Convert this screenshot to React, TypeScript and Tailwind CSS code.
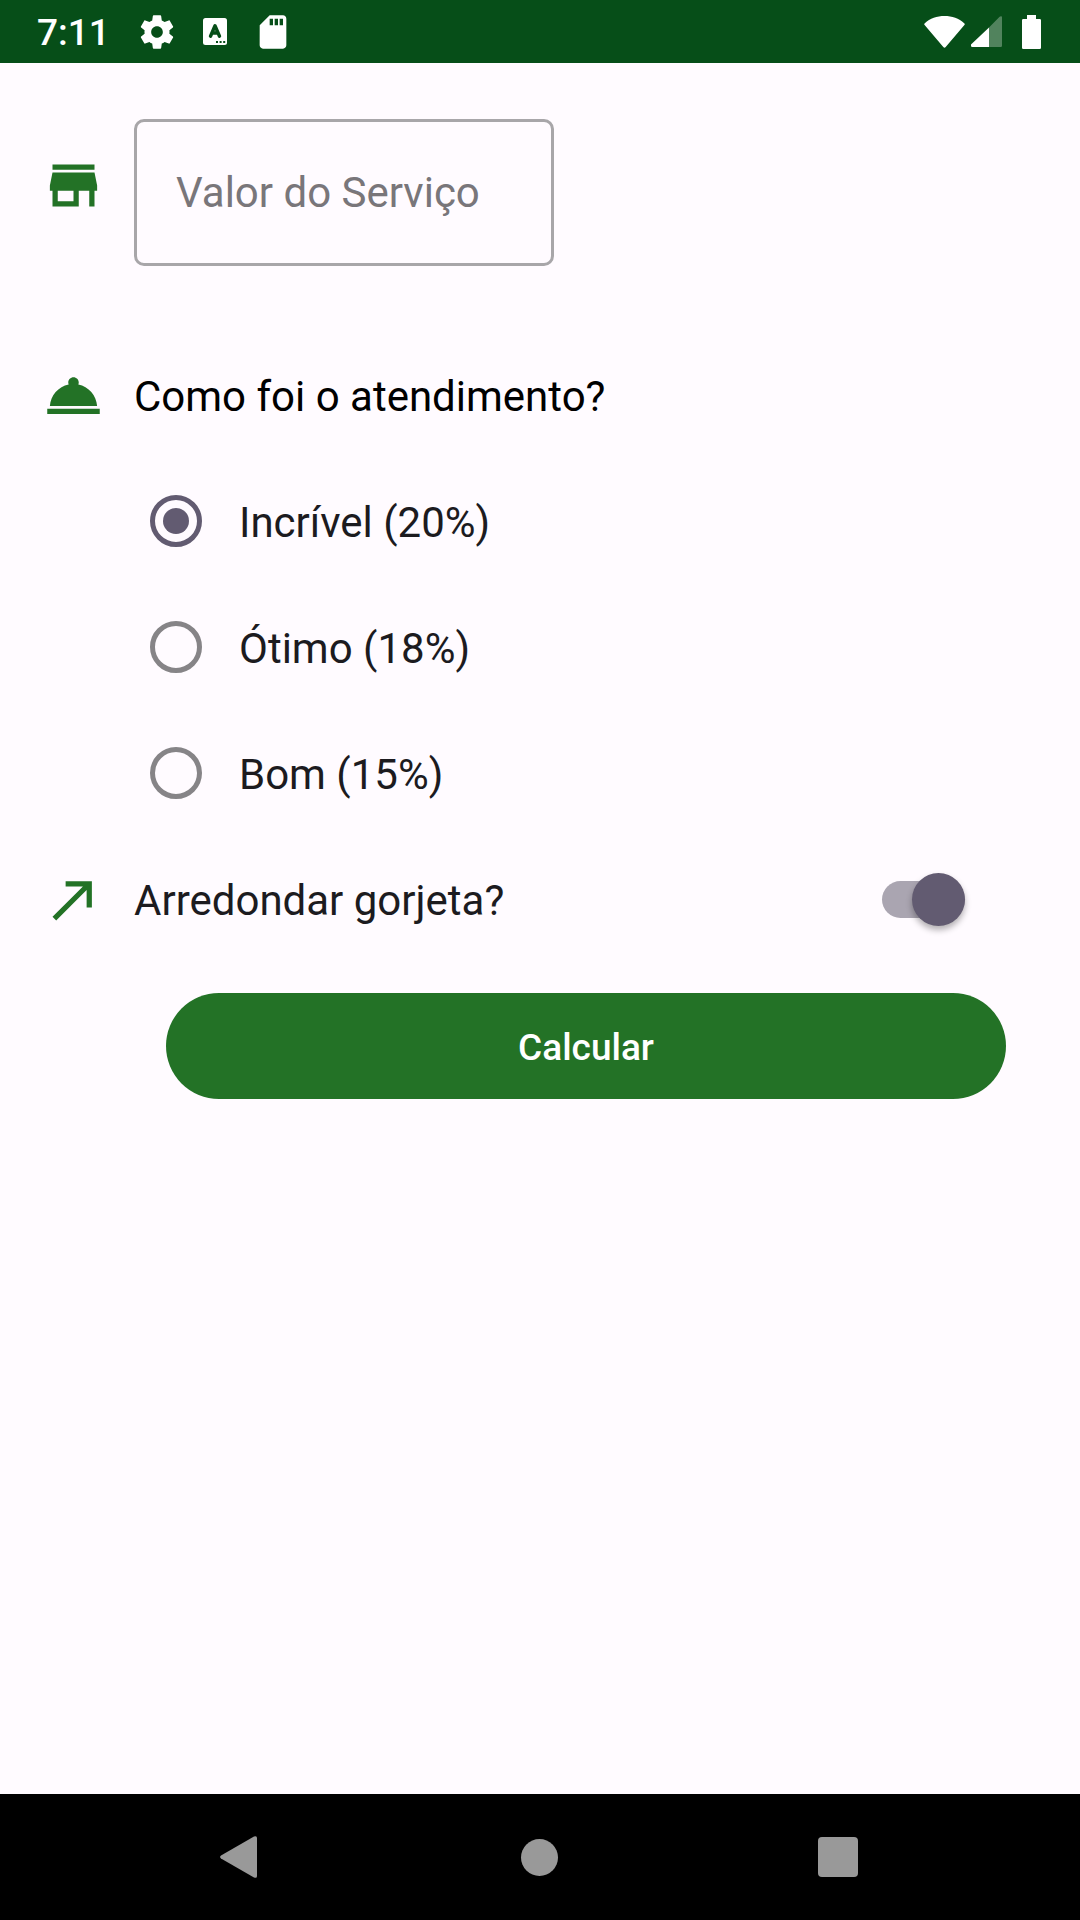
import { useState } from "react";

const OPTIONS = [
  { value: "20", label: "Incrível (20%)" },
  { value: "18", label: "Ótimo (18%)" },
  { value: "15", label: "Bom (15%)" },
];

function Icon({ d, className }: { d: string; className: string }) {
  return (
    <svg viewBox="0 0 24 24" fill="currentColor" aria-hidden="true" className={className}>
      <path d={d} />
    </svg>
  );
}

function StatusBar() {
  return (
    <header className="flex h-[63px] items-center justify-between bg-[#064e18] pl-[37px] pr-[39px] text-white">
      <div className="flex items-center">
        <span className="text-[37px] leading-[43px] font-medium pt-0.5">7:11</span>
        <Icon
          className="ml-[27px] size-10"
          d="M19.43 12.98c.04-.32.07-.64.07-.98s-.03-.66-.07-.98l2.11-1.65c.19-.15.24-.42.12-.64l-2-3.460c-.12-.22-.39-.3-.61-.22l-2.490 1c-.52-.4-1.080-.73-1.690-.98l-.38-2.650C14.460 2.180 14.250 2 14 2h-4c-.25 0-.46.180-.49.420l-.38 2.650c-.61.25-1.170.59-1.690.98l-2.490-1c-.23-.09-.49 0-.61.22l-2 3.460c-.13.22-.07.49.12.640l2.110 1.650c-.04.320-.07.650-.07.980s.03.660.07.980l-2.110 1.650c-.19.150-.24.420-.12.640l2 3.460c.12.220.39.300.61.220l2.490-1c.52.400 1.080.730 1.690.980l.38 2.650c.03.240.24.420.49.420h4c.25 0 .46-.18.49-.42l.38-2.650c.61-.25 1.170-.59 1.690-.98l2.490 1c.23.090.49 0 .61-.22l2-3.460c.12-.22.07-.49-.12-.64l-2.110-1.650zM12 15.500c-1.930 0-3.500-1.570-3.500-3.500s1.570-3.500 3.500-3.500 3.500 1.570 3.500 3.500-1.570 3.500-3.500 3.500z"
        />
        <svg viewBox="0 0 24 27" className="ml-[26px] h-[27px] w-6" aria-hidden="true">
          <rect width="24" height="27" rx="2.5" fill="#fff" />
          <path
            d="M7.500 18.200 12 7.800l4.500 10.400M9 15h6"
            fill="none"
            stroke="#064e18"
            strokeWidth="3.4"
            strokeLinecap="round"
            strokeLinejoin="round"
          />
          <path d="M13 23h2v2h-2zM16.600 23h2v2h-2zM20.200 23h2v2h-2z" fill="#064e18" />
        </svg>
        <Icon
          className="ml-[26px] size-10"
          d="M18 2h-8L4.020 8 4 20c0 1.100.9 2 2 2h12c1.100 0 2-.9 2-2V4c0-1.100-.9-2-2-2zm-6 6h-2V4h2v4zm3 0h-2V4h2v4zm3 0h-2V4h2v4z"
        />
      </div>
      <div className="flex items-center">
        <svg viewBox="0 0 41 32" className="h-8 w-[41px]" fill="currentColor" aria-hidden="true">
          <path d="M.6 9Q-.2 8 .8 7.200C6 2.500 13 0 20.500 0S35 2.500 40.200 7.200q1 .8.2 1.800L21.700 31q-1.200 1.300-2.400 0z" />
        </svg>
        <svg viewBox="0 0 31 31" className="ml-1.5 h-[31px] w-[31px]" fill="currentColor" aria-hidden="true">
          <path d="M18 11.500V31H1.200Q0 31 0 29.800V28.600z" />
          <path opacity=".3" d="M18 11.500V31h11.800q1.200 0 1.200-1.200V1.200C31 0 29.500-.2 28.600.8z" />
        </svg>
        <svg viewBox="0 0 19 34" className="ml-5 h-[34px] w-[19px]" fill="currentColor" aria-hidden="true">
          <path d="M5 0h9v4h3.700Q19 4 19 5.300v27.400q0 1.300-1.300 1.300H1.300Q0 34 0 32.700V5.300Q0 4 1.300 4H5z" />
        </svg>
      </div>
    </header>
  );
}

function NavigationBar() {
  return (
    <nav aria-label="Sistema" className="flex h-[126px] items-center justify-between bg-black pl-[220px] pr-[222px] text-[#999]">
      <button type="button" aria-label="Voltar" className="w-10">
        <svg viewBox="0 0 37 42" className="h-[42px] w-[37px]" fill="currentColor">
          <path d="M1 19.400Q-.8 21 1 22.600L34 41.500q3 1.200 3-1.500V2Q37-.7 34 .5z" />
        </svg>
      </button>
      <button type="button" aria-label="Início" className="size-[37px] rounded-full bg-[#999]" />
      <button type="button" aria-label="Recentes" className="size-10 rounded bg-[#999]" />
    </nav>
  );
}

export default function App() {
  const [cost, setCost] = useState("");
  const [service, setService] = useState("20");
  const [roundUp, setRoundUp] = useState(true);

  return (
    <div className="flex min-h-screen flex-col bg-[#fffbff] font-[Roboto,sans-serif] text-[42px] leading-[49px] text-[#1c1b1f]">
      <StatusBar />
      <main className="flex-1 pt-14">
        <form onSubmit={(event) => event.preventDefault()}>
          <div className="flex items-start gap-[29px] pl-[42px]">
            <Icon
              className="mt-[35px] size-[63px] text-[#237226]"
              d="M20 4H4v2h16V4zm1 10v-2l-1-5H4l-1 5v2h1v6h10v-6h4v6h2v-6h1zm-9 4H6v-4h6v4z"
            />
            <input
              type="text"
              inputMode="decimal"
              aria-label="Valor do Serviço"
              placeholder="Valor do Serviço"
              value={cost}
              onChange={(event) => setCost(event.target.value)}
              className="h-[147px] w-[420px] rounded-[10px] border-3 border-[#a8a6a9] bg-transparent px-[39px] outline-none placeholder:text-[#79767a]"
            />
          </div>

          <fieldset className="mt-[98px]">
            <legend className="flex items-center gap-[29px] pl-[42px] text-black">
              <Icon
                className="size-[63px] text-[#237226]"
                d="M2 17h20v2H2zm11.840-9.210c.1-.24.160-.51.160-.79 0-1.100-.9-2-2-2s-2 .9-2 2c0 .28.060.55.160.79C6.250 8.600 3.270 11.930 3 16h18c-.27-4.070-3.250-7.400-7.160-8.210z"
              />
              <span className="pt-0.5">Como foi o atendimento?</span>
            </legend>
            <div className="mt-[31px] flex flex-col items-start pl-[150px]">
              {OPTIONS.map((option) => (
                <label key={option.value} className="flex h-[126px] items-center gap-[37px]">
                  <input
                    type="radio"
                    name="service"
                    value={option.value}
                    checked={service === option.value}
                    onChange={() => setService(option.value)}
                    className="grid size-[52px] appearance-none place-items-center rounded-full border-5 border-[#868487] before:size-[26px] before:rounded-full checked:border-[#625b71] checked:before:bg-[#625b71]"
                  />
                  <span className="pt-0.5">{option.label}</span>
                </label>
              ))}
            </div>
          </fieldset>

          <label className="flex h-[126px] items-center gap-[29px] pl-[42px] pr-[115px]">
            <Icon className="size-[63px] text-[#237226]" d="M9 5v2h6.590L4 18.590 5.410 20 17 8.410V15h2V5z" />
            <span className="flex-1 pt-0.5">Arredondar gorjeta?</span>
            <input
              type="checkbox"
              role="switch"
              checked={roundUp}
              onChange={(event) => setRoundUp(event.target.checked)}
              className="flex h-[37px] w-[83px] appearance-none items-center rounded-full bg-[#c9c5ca] before:size-[53px] before:shrink-0 before:rounded-full before:bg-[#f4eff4] before:shadow-[0_4px_6px_rgba(0,0,0,0.3)] checked:justify-end checked:bg-[#aaa5b1] checked:before:bg-[#625b71]"
            />
          </label>

          <div className="mt-[31px] pl-[166px] pr-[74px]">
            <button
              type="submit"
              className="h-[106px] w-full rounded-full bg-[#237226] pt-0.5 text-[37px] leading-[43px] font-medium text-white"
            >
              Calcular
            </button>
          </div>
        </form>
      </main>
      <NavigationBar />
    </div>
  );
}
